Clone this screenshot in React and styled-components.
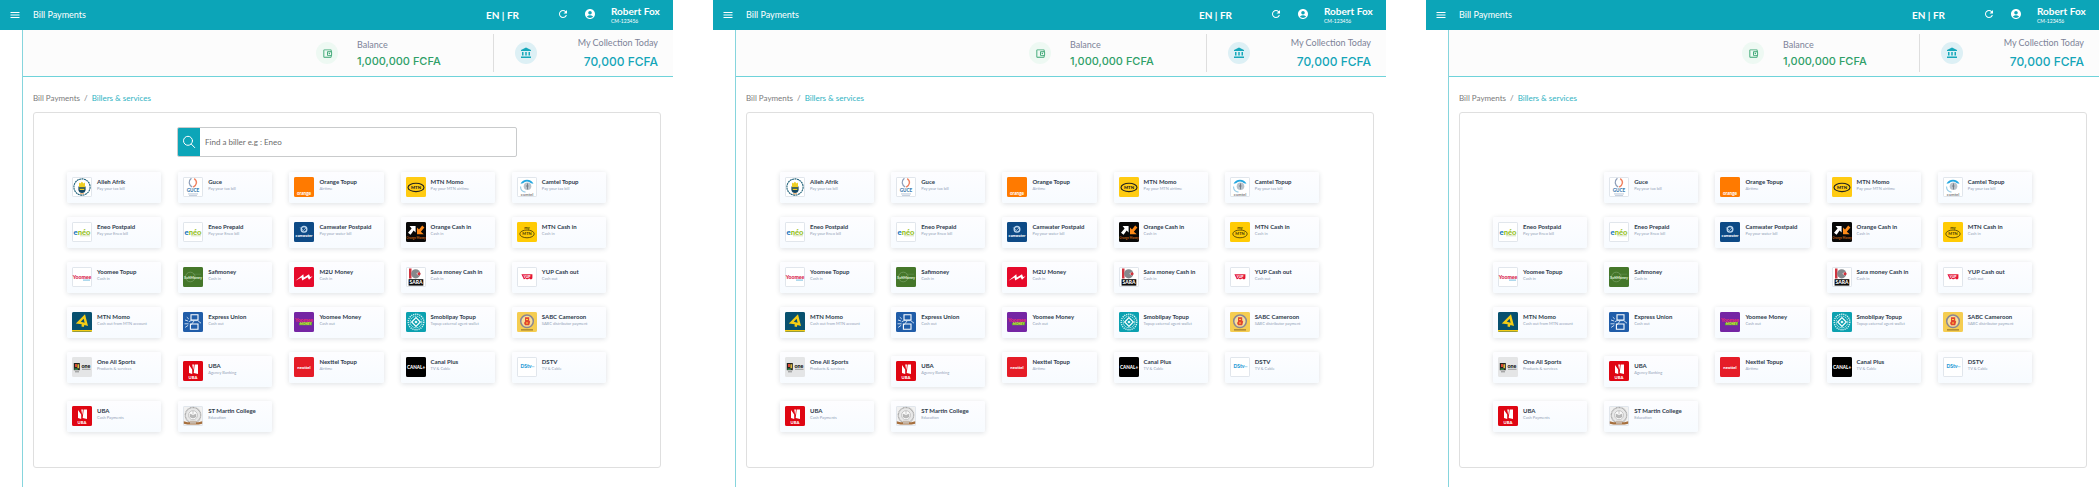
import React from "react";
import styled, { createGlobalStyle } from "styled-components";
import { MdMenu, MdRefresh, MdAccountCircle, MdAccountBalance, MdOutlineAccountBalanceWallet } from "react-icons/md";

const GlobalStyle = createGlobalStyle`
  *, *::before, *::after { box-sizing: border-box; }
  body { margin: 0; background: #fff; font-family: Lato, "Open Sans", sans-serif; }
  button, input { font-family: inherit; }
  svg { display: block; }
`;

const Board = styled.div`
  display: flex;
  gap: 40px;
  min-height: 100vh;
`;
const Screen = styled.section`
  flex: 1;
  min-width: 0;
  display: flex;
  flex-direction: column;
`;
const TopBar = styled.header`
  display: flex;
  align-items: center;
  height: 30px;
  padding: 0 12px 0 9px;
  background: #0ca5b8;
  color: #fff;
`;
const IconButton = styled.button`
  display: flex;
  padding: 0;
  border: 0;
  background: none;
  color: inherit;
  cursor: pointer;
  margin-right: ${(p) => p.$after || 0}px;
  margin-bottom: ${(p) => (p.$raised ? 2 : 0)}px;
`;
const Title = styled.h1`
  flex: 1;
  margin: 0;
  font-size: 9px;
  line-height: 12px;
  font-weight: 400;
`;
const Language = styled.button`
  padding: 0;
  border: 0;
  background: none;
  color: inherit;
  margin-right: 38px;
  font-size: 10px;
  line-height: 12px;
  font-weight: 700;
  cursor: pointer;
`;
const User = styled.div`
  width: 50px;
  white-space: nowrap;
`;
const UserName = styled.div`
  font-size: 10px;
  line-height: 12px;
  font-weight: 700;
`;
const UserCode = styled.div`
  font-size: 5px;
  line-height: 8px;
`;
const Body = styled.div`
  flex: 1;
  display: flex;
  flex-direction: column;
  margin-left: 22px;
  border-left: 1px solid #86d5dd;
`;
const Stats = styled.div`
  display: flex;
  align-items: center;
  justify-content: flex-end;
  height: 47px;
  padding-right: 15px;
  background: #fcfcfc;
  border-bottom: 1px solid #6fd3da;
`;
const Badge = styled.div`
  display: flex;
  align-items: center;
  justify-content: center;
  width: 22px;
  height: 22px;
  border-radius: 50%;
  background: ${(p) => p.$bg};
  color: ${(p) => p.$fg};
`;
const Figure = styled.div`
  display: flex;
  flex-direction: column;
  gap: ${(p) => (p.$end ? 6 : 3)}px;
  width: ${(p) => (p.$end ? 121 : 155)}px;
  padding-left: ${(p) => (p.$end ? 0 : 19)}px;
  text-align: ${(p) => (p.$end ? "right" : "left")};
  white-space: nowrap;
`;
const Label = styled.div`
  font-size: 9px;
  line-height: 12px;
  color: #7c8398;
`;
const Amount = styled.div`
  font-family: Inter, sans-serif;
  font-size: ${(p) => p.$size}px;
  line-height: 14px;
  font-weight: 500;
  color: ${(p) => p.$fg};
`;
const Divider = styled.div`
  width: 1px;
  height: 38px;
  margin-right: 21px;
  background: #dedede;
`;
const Content = styled.main`
  flex: 1;
  display: flex;
  flex-direction: column;
  padding: 15px 12px 19px 10px;
`;
const Crumbs = styled.nav`
  display: flex;
  gap: 4px;
  height: 20px;
  font-size: 8px;
  line-height: 12px;
  color: #7b7b7b;
`;
const Crumb = styled.a`
  color: ${(p) => (p.$current ? "#2fb3c3" : "inherit")};
  text-decoration: none;
`;
const Panel = styled.div`
  flex: 1;
  padding: 14px 54px 34px 33px;
  border: 1px solid #dfdfdf;
  border-radius: 3px;
`;
const SearchSlot = styled.div`
  height: 45px;
  padding: 0 0 15px 21px;
  display: flex;
  justify-content: center;
`;
const SearchBox = styled.form`
  display: flex;
  width: 340px;
  border: 1px solid #c9cbcc;
  border-radius: 2px;
`;
const SearchButton = styled.button`
  display: flex;
  align-items: center;
  justify-content: center;
  width: 22px;
  padding: 0;
  border: 0;
  border-radius: 1px 0 0 1px;
  background: #0ca5b8;
`;
const SearchInput = styled.input`
  flex: 1;
  min-width: 0;
  border: 0;
  outline: 0;
  padding: 0 5px;
  background: none;
  font-size: 8px;
  &::placeholder { color: #6b6b6b; opacity: 1; }
`;
const Grid = styled.div`
  display: grid;
  grid-template-columns: repeat(5, minmax(0, 1fr));
  gap: 14px 17px;
  align-items: start;
`;
const Card = styled.button`
  display: flex;
  gap: 5px;
  height: 31px;
  margin-top: ${(p) => (p.$low ? 4 : 0)}px;
  padding: 5px;
  border: 0;
  border-radius: 2px;
  background: linear-gradient(#fdfdff, #f7fbff);
  box-shadow: 0 1px 5px rgba(30, 45, 70, 0.15);
  text-align: left;
  white-space: nowrap;
  cursor: pointer;
`;
const CardEmpty = styled.div`
  height: 31px;
`;
const CardText = styled.span`
  display: flex;
  flex-direction: column;
  padding-top: 1px;
`;
const CardName = styled.span`
  font-size: 6px;
  line-height: 8px;
  font-weight: 700;
  color: #2f3b4c;
`;
const CardNote = styled.span`
  font-size: 4px;
  line-height: 6px;
  color: #94a3b8;
`;
const LogoSvg = styled.svg`
  flex: none;
  width: 20px;
  height: 20px;
  font-family: Lato, sans-serif;
  font-weight: 900;
`;

const Tile = ({ fill = "#fff", stroke = "none", children }) => (
  <LogoSvg viewBox="0 0 20 20" aria-hidden="true">
    <rect x="0.5" y="0.5" width="19" height="19" rx="0.6" fill={fill} stroke={stroke === "none" ? fill : stroke} />
    {children}
  </LogoSvg>
);
const edge = "#e1e6ec";
const Word = ({ y, size, fill, x = 10, children }) => (
  <text x={x} y={y} fontSize={size} fill={fill} textAnchor="middle">{children}</text>
);
const UbaLogo = () => (
  <Tile fill="#df0613">
    <path d="M6 4l3.2 4.4V13L6 12zM10.7 12l1-8.5H15V13z" fill="#fff" />
    <path d="M9.2 3.5h1.8L10.3 9z" fill="#fff" />
    <Word y={17.6} size={4.2} fill="#fff">UBA</Word>
  </Tile>
);
const EneoLogo = () => (
  <Tile stroke={edge}>
    <text x="10" y="12.5" fontSize="7.6" textAnchor="middle">
      <tspan fill="#1276bd">e</tspan><tspan fill="#96c11e">néo</tspan>
    </text>
    <path d="M8 13.8h10" stroke="#c5d6a0" strokeWidth="0.7" />
  </Tile>
);

const logos = {
  alleh: (
    <Tile stroke={edge}>
      <circle cx="10" cy="10" r="8.1" fill="#fff" stroke="#1d5f78" strokeWidth="1.1" strokeDasharray="2 0.5" />
      <path d="M6.4 9.5h7.2v3.2c0 2-1.6 3.3-3.6 3.3s-3.6-1.3-3.6-3.3z" fill="#164863" />
      <path d="M7 5.5l1.2 1 1.7-1.7 1.8 1.7 1.3-1v4.7H7z" fill="#efcf24" />
      <path d="M7.2 11.8h5.6l-.8 1.2H8z" fill="#efcf24" />
      <path d="M8 16.7h4" stroke="#e58a2d" strokeWidth="0.7" />
    </Tile>
  ),
  guce: (
    <Tile stroke={edge}>
      <path d="M8.4 1.3C5 4 5.7 7.7 9.2 10.1" fill="none" stroke="#8d9db8" strokeWidth="1.2" />
      <path d="M11.2 1.6c3.7 2.7 2.5 6.3-1 8.6" fill="none" stroke="#f08260" strokeWidth="1.4" />
      <Word y={15.3} size={4.6} fill="#397aae">GUCE</Word>
      <path d="M5 16.9h10M6 18.4h8" stroke="#aebfd2" strokeWidth="0.8" />
    </Tile>
  ),
  orange: <Tile fill="#ff7a00"><Word y={18} size={4.6} fill="#fff">orange</Word></Tile>,
  mtn: (
    <Tile fill="#ffcb12">
      <ellipse cx="10" cy="10.4" rx="8" ry="4.2" fill="none" stroke="#222" strokeWidth="1.1" />
      <Word y={12} size={4.3} fill="#222">MTN</Word>
    </Tile>
  ),
  camtel: (
    <Tile stroke={edge}>
      <path d="M3.5 6.8a7.3 7.3 0 0 1 13 0l-2.5-.5a5.5 5.5 0 0 0-8 0z" fill="#24a7e0" />
      <path d="M3.5 9.5c0 3.2 2 5.2 5 5.7" fill="none" stroke="#9ccfe8" strokeWidth="1.2" />
      <circle cx="10.5" cy="9.3" r="3.8" fill="#b9c2ca" />
      <path d="M10.5 6.4v6M9 9h2.5" stroke="#6f7983" strokeWidth="0.9" />
      <Word y={18.5} size={4.2} fill="#8c8c8c">camtel</Word>
    </Tile>
  ),
  eneo: <EneoLogo />,
  camwater: (
    <Tile fill="#0d4a86">
      <circle cx="10" cy="7.3" r="2.8" fill="none" stroke="#b9d4ec" strokeWidth="1.4" />
      <path d="M6.3 5.5l3 3 3.3-3.2" fill="none" stroke="#d7e7f5" strokeWidth="0.7" />
      <Word y={14.5} size={3.8} fill="#fff">camwater</Word>
    </Tile>
  ),
  orangeMoney: (
    <Tile fill="#080808">
      <path d="M3.6 4h6v6.4L7.6 8.600 4.600 12.800 2 10.800l3.600-4.200z" fill="#fff" />
      <path d="M17.800 12.200h-6.800V5.600l2 2L16.200 3.600l2.200 2-3.600 4.200z" fill="#ff8a18" />
      <Word y={16.6} size={2.9} fill="#b85b15">Orange Money</Word>
    </Tile>
  ),
  myMtn: (
    <Tile fill="#ffcb05">
      <Word y={6.5} size={4} fill="#534608">my</Word>
      <ellipse cx="10" cy="11.9" rx="7.2" ry="3.9" fill="none" stroke="#534608" strokeWidth="0.9" />
      <Word y={13.3} size={4} fill="#534608">MTN</Word>
    </Tile>
  ),
  yoomee: (
    <Tile stroke={edge}>
      <Word y={11.9} size={5.2} fill="#d81d4b">Yoomee</Word>
      <path d="M11 13.1h7" stroke="#55aedb" strokeWidth="0.8" />
    </Tile>
  ),
  safi: (
    <Tile fill="#45772a">
      <circle cx="7.3" cy="10" r="4.8" fill="none" stroke="#7ba268" strokeWidth="0.7" />
      <path d="M10 7.2h8" stroke="#6d975a" strokeWidth="0.5" />
      <Word y={11.5} size={3.8} fill="#d8e7cc">SafiMoney</Word>
    </Tile>
  ),
  m2u: (
    <Tile fill="#e60a2b">
      <path d="M1.5 13.7l7.8-6.5.5 3.4 5.2-3.4 1.1 2.900 2.400-.8-3.500 3.500-1.400-2.500-5.400 3.200-.7-3.100z" fill="#fff" />
    </Tile>
  ),
  sara: (
    <Tile stroke={edge}>
      <rect x="3" y="1.5" width="2.5" height="10" fill="#cf3540" />
      <circle cx="9.7" cy="6.8" r="4.6" fill="#85888c" />
      <path d="M5.5 6.7h4.8l2.4-2v4l-2.4-2" fill="#e8e8e8" />
      <circle cx="13" cy="6.8" r="1.5" fill="#d5303a" />
      <rect x="2.6" y="12.2" width="14.7" height="6.4" fill="#090909" />
      <Word y={17.2} size={5} fill="#fff">SARA</Word>
    </Tile>
  ),
  yup: (
    <Tile stroke={edge}>
      <path d="M4.4 7.3h11v3.4c0 1-.8 1.5-1.5 1.5-1 0-1.4-.5-1.7-1-.5.7-1 1-1.8 1-1 0-1.5-.5-1.8-1-.4.7-1 1-1.8 1z" fill="#e41635" />
      <Word y={10.7} size={3.4} fill="#fff">YUP</Word>
    </Tile>
  ),
  momo: (
    <Tile fill="#07506f">
      <path d="M3.8 11.6L13 2.3l3 11.8-3.6-1.2-.7 2-2.2-.4.2-2.2z" fill="#f5cd16" />
      <path d="M8.8 9.8l2.8-3 1 4z" fill="#07506f" />
      <rect y="18" width="20" height="1.6" fill="#f5cd16" />
    </Tile>
  ),
  express: (
    <Tile fill="#205da9">
      <path d="M8 2.800h7v5.200H8zM7.400 12h7.600v5.200H7.400z" fill="none" stroke="#fff" strokeWidth="1.1" />
      <path d="M5.7 9.8L8 8.6h6.7L18 11.2M2 8l3 1M2.2 15.4l3-2.1M3.8 5.2l2 1.8M1.5 11.8h4M11 9l-3 4" fill="none" stroke="#d9e8f6" strokeWidth="0.9" />
    </Tile>
  ),
  yoomeeMoney: (
    <Tile fill="#7525a4">
      <Word y={10.2} size={5} fill="#e52b75">Yoomee</Word>
      <path d="M5 11l13-1.2v3.4H5z" fill="#58a33c" />
      <Word y={13.2} size={3} fill="#d9df39" x={11.5}>MONEY</Word>
    </Tile>
  ),
  smobil: (
    <Tile fill="#0ba1b0">
      <circle cx="10" cy="10" r="7.8" fill="none" stroke="#d9f2f4" strokeWidth="1.4" strokeDasharray="1.2 0.9" />
      <circle cx="10" cy="10" r="5.8" fill="none" stroke="#c9ecef" strokeWidth="1" strokeDasharray="1.5 0.8" />
      <path d="M10 5.7l4.3 4.3-4.3 4.3L5.7 10z" fill="none" stroke="#fff" strokeWidth="1.2" />
      <path d="M10 8.4l1.6 1.6-1.6 1.6L8.4 10z" fill="#fff" />
    </Tile>
  ),
  sabc: (
    <Tile fill="#f5cd51">
      <circle cx="10" cy="9.3" r="6.3" fill="#f9df9b" stroke="#8a8794" strokeWidth="1.5" />
      <path d="M8 5.2h4.2v3.2l1 1-1 3.8H8l-1-2.3 1-1.5z" fill="#e2462e" />
      <path d="M9 7.5h2M9 11h2" stroke="#ffd340" strokeWidth="1" />
      <path d="M4 17.9h12" stroke="#8b6825" strokeWidth="1" />
    </Tile>
  ),
  oneAll: (
    <Tile fill="#e4e5e6">
      <rect x="1.8" y="6" width="6" height="7.2" fill="#24241f" />
      <path d="M3 7h2v3H3z" fill="#d84a34" />
      <path d="M5.4 7.2h1.6v4H5.4z" fill="#e2bd3f" />
      <path d="M2.4 11.4h3.5V13H2.4z" fill="#35824c" />
      <Word y={10.5} size={5.3} fill="#111" x={14}>one</Word>
      <path d="M10 12.3h8.5" stroke="#888" strokeWidth="0.8" />
      <path d="M3 14.8h4" stroke="#666" strokeWidth="0.7" />
    </Tile>
  ),
  uba: <UbaLogo />,
  nexttel: <Tile fill="#e51c27"><Word y={11.7} size={4.3} fill="#fff">nexttel</Word></Tile>,
  canal: <Tile fill="#000"><Word y={11.6} size={4.6} fill="#fff">CANAL+</Word></Tile>,
  dstv: <Tile stroke={edge}><Word y={10.7} size={5} fill="#2499d5" x={9}>DStv</Word><path d="M14 9.7h3.5" stroke="#8ac7e8" strokeWidth="0.8" /></Tile>,
  martin: (
    <Tile fill="#f1f1f1" stroke={edge}>
      <circle cx="10" cy="9.2" r="7.7" fill="#e8e8e8" stroke="#a8a8a8" strokeWidth="1.3" strokeDasharray="1.1 0.4" />
      <circle cx="10" cy="9.2" r="4.5" fill="#fafafa" stroke="#aaa" strokeWidth="0.6" />
      <path d="M7.2 8.2l2.8 1.2 2.8-1.2v2.7L10 12l-2.8-1.1zM10 5v3" fill="#bbb" stroke="#999" strokeWidth="0.5" />
      <path d="M.8 15.2l3.7 1h11l3.7-1v2.6l-3.7.6h-11l-3.7-.6z" fill="#a66f3d" />
      <path d="M7 14.8h6v3H7z" fill="#c7b8aa" />
    </Tile>
  ),
};

const billers = [
  ["alleh", "Alleh Afrik", "Pay your tax bill"],
  ["guce", "Guce", "Pay your tax bill"],
  ["orange", "Orange Topup", "Airtime"],
  ["mtn", "MTN Momo", "Pay your MTN airtime"],
  ["camtel", "Camtel Topup", "Pay your tax bill"],
  ["eneo", "Eneo Postpaid", "Pay your Eneo bill"],
  ["eneo", "Eneo Prepaid", "Pay your Eneo bill"],
  ["camwater", "Camwater Postpaid", "Pay your water bill"],
  ["orangeMoney", "Orange Cash in", "Cash in"],
  ["myMtn", "MTN Cash in", "Cash in"],
  ["yoomee", "Yoomee Topup", "Cash in"],
  ["safi", "Safimoney", "Cash in"],
  ["m2u", "M2U Money", "Cash in"],
  ["sara", "Sara money Cash in", "Cash in"],
  ["yup", "YUP Cash out", "Cash out"],
  ["momo", "MTN Momo", "Cash out from MTN account"],
  ["express", "Express Union", "Cash out"],
  ["yoomeeMoney", "Yoomee Money", "Cash out"],
  ["smobil", "Smobilpay Topup", "Topup external agent wallet"],
  ["sabc", "SABC Cameroon", "SABC distributor payment"],
  ["oneAll", "One All Sports", "Products & services"],
  ["uba", "UBA", "Agency Banking"],
  ["nexttel", "Nexttel Topup", "Airtime"],
  ["canal", "Canal Plus", "TV & Cable"],
  ["dstv", "DSTV", "TV & Cable"],
  ["uba", "UBA", "Cash Payments"],
  ["martin", "ST Martin College", "Education"],
];

const SearchIcon = () => (
  <svg width="14" height="14" viewBox="0 0 14 14" fill="none" stroke="#fff" strokeWidth="1" strokeLinecap="round">
    <circle cx="6" cy="5.8" r="4.5" />
    <path d="M9.3 9.1l3.4 3.5" />
  </svg>
);

const BillersScreen = ({ search = false, hidden = [] }) => (
  <Screen>
    <TopBar>
      <IconButton $after={12} aria-label="Menu"><MdMenu size={12} /></IconButton>
      <Title>Bill Payments</Title>
      <Language>EN | FR</Language>
      <IconButton $after={15} $raised aria-label="Refresh"><MdRefresh size={12} /></IconButton>
      <IconButton $after={15} $raised aria-label="Account"><MdAccountCircle size={12} /></IconButton>
      <User>
        <UserName>Robert Fox</UserName>
        <UserCode>CM-123456</UserCode>
      </User>
    </TopBar>
    <Body>
      <Stats>
        <Badge $bg="#eef9f3" $fg="#38a572"><MdOutlineAccountBalanceWallet size={11} /></Badge>
        <Figure>
          <Label>Balance</Label>
          <Amount $fg="#2f9f68" $size={11}>1,000,000 FCFA</Amount>
        </Figure>
        <Divider />
        <Badge $bg="#ddf0f5" $fg="#16a8ba"><MdAccountBalance size={12} /></Badge>
        <Figure $end>
          <Label>My Collection Today</Label>
          <Amount $fg="#14a5b8" $size={12}>70,000 FCFA</Amount>
        </Figure>
      </Stats>
      <Content>
        <Crumbs aria-label="Breadcrumb">
          <Crumb href="#bills">Bill Payments</Crumb>
          <span>/</span>
          <Crumb href="#billers" $current>Billers &amp; services</Crumb>
        </Crumbs>
        <Panel>
          <SearchSlot>
            {search && (
              <SearchBox role="search">
                <SearchButton type="button" aria-label="Search"><SearchIcon /></SearchButton>
                <SearchInput aria-label="Find a biller" placeholder="Find a biller e.g : Eneo" />
              </SearchBox>
            )}
          </SearchSlot>
          <Grid>
            {billers.map(([logo, name, note]) =>
              hidden.includes(name) ? (
                <CardEmpty key={name + note} />
              ) : (
                <Card key={name + note} $low={note === "Agency Banking"}>
                  {logos[logo]}
                  <CardText>
                    <CardName>{name}</CardName>
                    <CardNote>{note}</CardNote>
                  </CardText>
                </Card>
              )
            )}
          </Grid>
        </Panel>
      </Content>
    </Body>
  </Screen>
);

export default function App() {
  return (
    <>
      <GlobalStyle />
      <Board>
        <BillersScreen search />
        <BillersScreen />
        <BillersScreen hidden={["Alleh Afrik", "M2U Money"]} />
      </Board>
    </>
  );
}
